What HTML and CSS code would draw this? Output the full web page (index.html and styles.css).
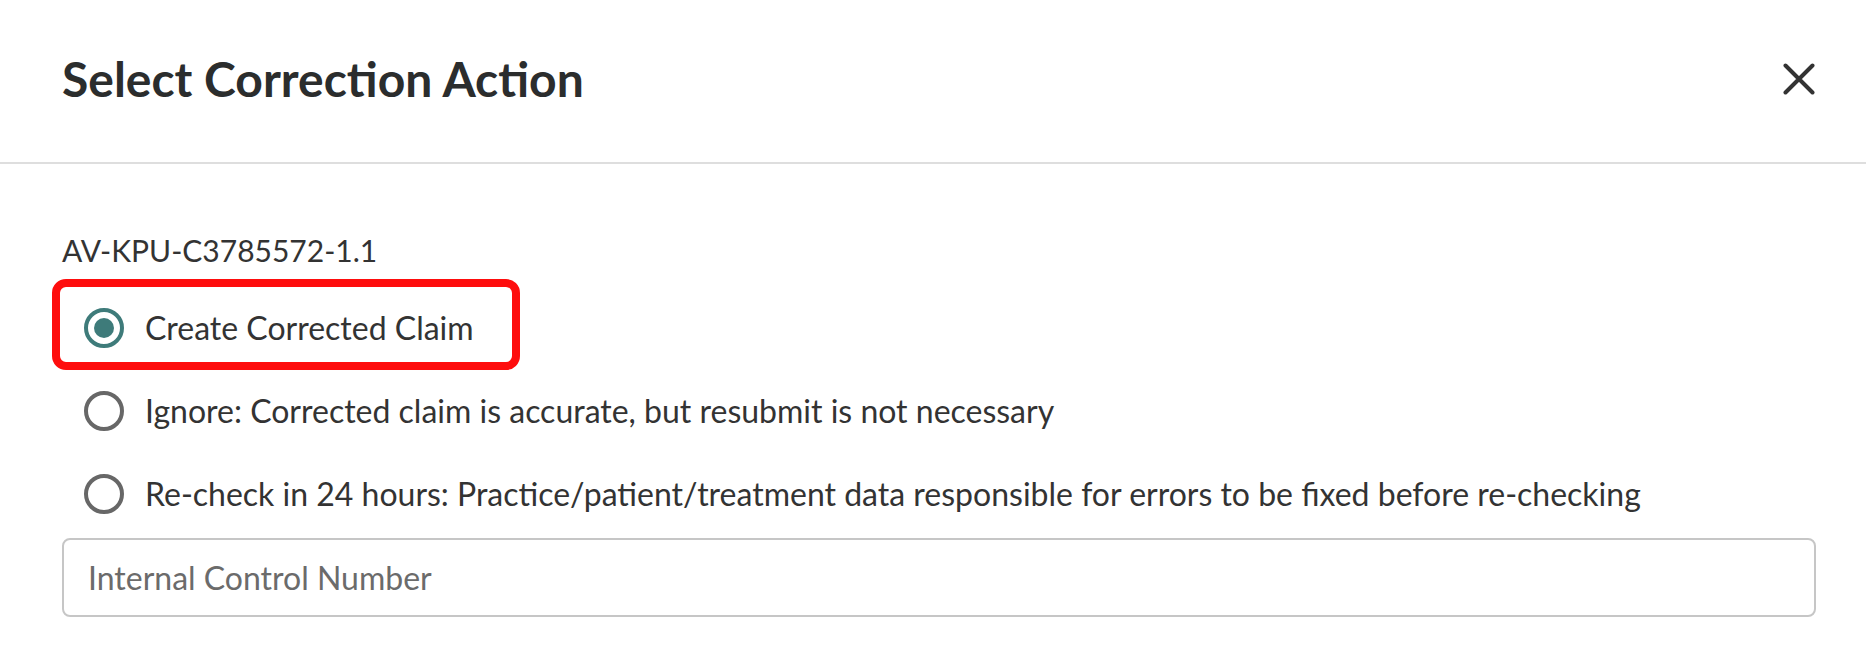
FILE: index.html
```html
<!DOCTYPE html>
<html lang="en">
<head>
<meta charset="utf-8">
<title>Select Correction Action</title>
<link rel="stylesheet" href="styles.css">
</head>
<body>
<div class="modal">
  <header class="modal-header">
    <h1 class="modal-title">Select Correction Action</h1>
    <button class="close-btn" type="button" aria-label="Close">
      <svg width="32" height="32" viewBox="0 0 32 32" aria-hidden="true">
        <path d="M2.5 2.5 L29.5 29.5 M29.5 2.5 L2.5 29.5" stroke="#333" stroke-width="4" stroke-linecap="round" fill="none"/>
      </svg>
    </button>
  </header>
  <div class="modal-body">
    <div class="claim-id">AV-KPU-C3785572-1.1</div>
    <div class="options">
      <label class="option highlighted">
        <input type="radio" name="action" class="radio" checked>
        <span class="option-text">Create Corrected Claim</span>
        <span class="highlight-box" aria-hidden="true"></span>
      </label>
      <label class="option">
        <input type="radio" name="action" class="radio">
        <span class="option-text">Ignore: Corrected claim is accurate, but resubmit is not necessary</span>
      </label>
      <label class="option">
        <input type="radio" name="action" class="radio">
        <span class="option-text">Re-check in 24 hours: Practice/patient/treatment data responsible for errors to be fixed before re-checking</span>
      </label>
    </div>
    <input class="text-input" type="text" placeholder="Internal Control Number">
  </div>
</div>
</body>
</html>
```

FILE: styles.css
```css
* {
  box-sizing: border-box;
}

html, body {
  margin: 0;
  padding: 0;
  background: #ffffff;
}

body {
  font-family: Lato, "Open Sans", Arial, sans-serif;
  color: #333333;
  width: 1866px;
  height: 648px;
  overflow: hidden;
}

.modal-header {
  height: 164px;
  display: flex;
  align-items: center;
  justify-content: space-between;
  padding: 0 51px 4px 62px;
  border-bottom: 2px solid #dedede;
}

.modal-title {
  margin: 0;
  font-size: 48px;
  font-weight: 700;
  line-height: 1.2;
  color: #2b2d2d;
}

.close-btn {
  background: none;
  border: 0;
  padding: 0;
  width: 32px;
  height: 32px;
  display: flex;
  align-items: center;
  justify-content: center;
  cursor: pointer;
}

.modal-body {
  padding: 68px 50px 0 62px;
}

.claim-id {
  font-size: 30px;
  line-height: 1.2;
  color: #333333;
}

.options {
  display: flex;
  flex-direction: column;
  gap: 43px;
  margin-top: 40px;
  padding-left: 22px;
}

.option {
  position: relative;
  display: flex;
  align-items: center;
  gap: 21px;
  height: 40px;
  font-size: 32px;
  color: #333333;
  cursor: pointer;
}

.option-text {
  line-height: 1.2;
  white-space: nowrap;
}

.radio {
  appearance: none;
  -webkit-appearance: none;
  margin: 0;
  flex: 0 0 40px;
  width: 40px;
  height: 40px;
  border: 4px solid #676767;
  border-radius: 50%;
  background: #ffffff;
  display: flex;
  align-items: center;
  justify-content: center;
}

.radio:checked {
  border-color: #3e7b7a;
}

.radio:checked::after {
  content: "";
  width: 20px;
  height: 20px;
  border-radius: 50%;
  background: #3e7b7a;
}

.highlight-box {
  position: absolute;
  left: -32px;
  top: -29px;
  width: 468px;
  height: 91px;
  border: 8px solid #fe0d0d;
  border-radius: 14px;
  pointer-events: none;
}

.text-input {
  display: block;
  width: 100%;
  height: 79px;
  margin-top: 24px;
  padding: 0 24px;
  border: 2px solid #c6c6c6;
  border-radius: 8px;
  font-family: Lato, "Open Sans", Arial, sans-serif;
  font-size: 32px;
  color: #333333;
  background: #ffffff;
  outline: none;
}

.text-input::placeholder {
  color: #6b6b6b;
  opacity: 1;
}
```
